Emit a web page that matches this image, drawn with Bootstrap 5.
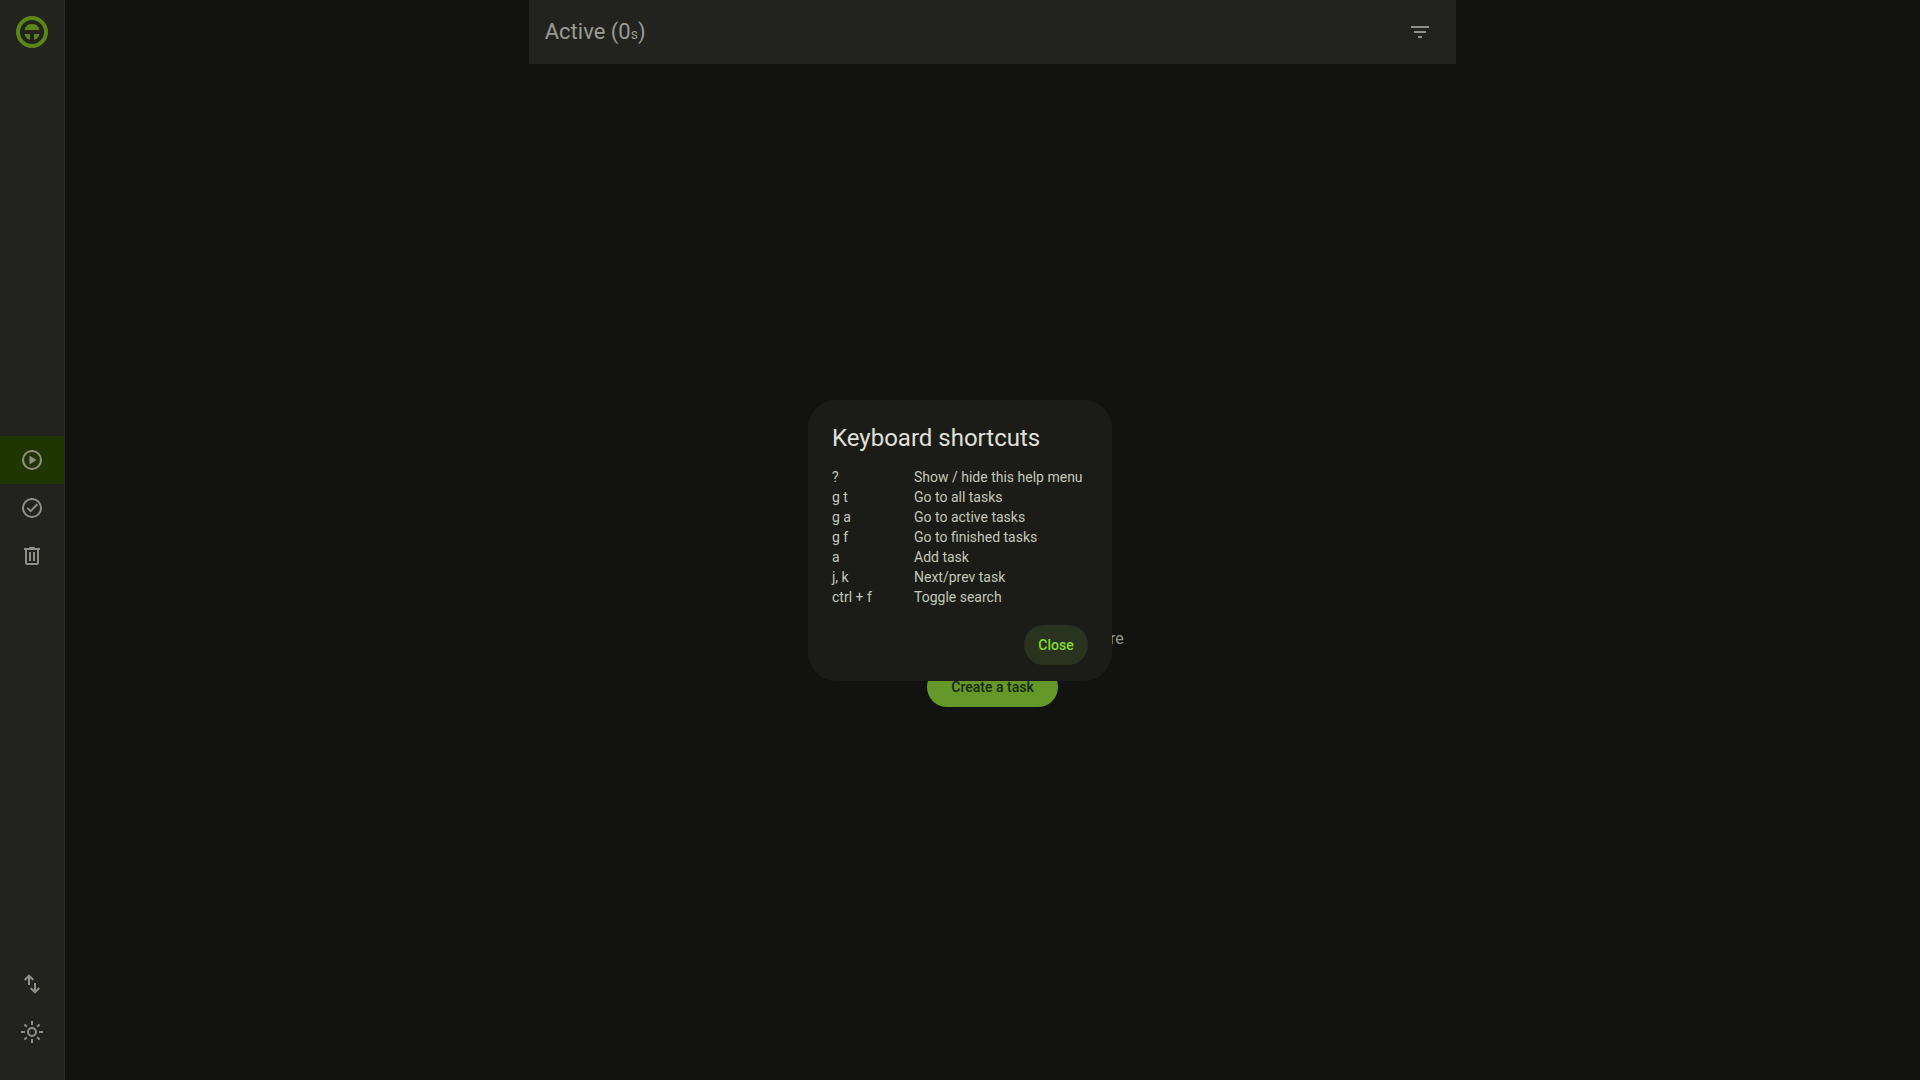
<!DOCTYPE html>
<html lang="en" data-bs-theme="dark">
<head>
<meta charset="utf-8">
<meta name="viewport" content="width=device-width, initial-scale=1">
<title>Active tasks</title>
<link href="https://cdn.jsdelivr.net/npm/bootstrap@5.3.0/dist/css/bootstrap.min.css" rel="stylesheet">
<style>
  body { background: #121310; color: #93948b; font-family: Roboto, "Liberation Sans", sans-serif; }
  .rail { width: 65px; background: #22231e; border-right: 1px solid #2e2f2a; color: #8f9087; }
  .rail-link { height: 48px; color: inherit; }
  .rail-link.active { background: #203600; }
  .brand-link { color: #5b8615; }
  .task-pane { width: 50%; }
  .pane-bar { height: 64px; background: #22231e; }
  .pane-title { font-size: 22px; line-height: 28px; padding-top: 2px; color: #9a9b92; }
  .unit { font-size: 14px; }
  .icon-btn { width: 40px; height: 40px; color: #8f9087; }
  .empty-state { padding-top: 190px; }
  .empty-note { font-size: 16px; line-height: 24px; }
  .pill { height: 40px; font-size: 14px; line-height: 20px; font-weight: 500; border-radius: 20px; border: 0; }
  .pill-main, .pill-main:hover { background: #659729; color: #14290a; min-width: 131px; }
  .pill-soft, .pill-soft:hover { background: #2a331f; color: #83dd2b; min-width: 64px; }
  .help-layer { padding-top: 1px; }
  .help-dialog { width: 304px; }
  .help-panel { background: #1b1c18; border: 0; border-radius: 28px; padding: 22px 24px 16px; }
  .help-title { font-size: 24px; line-height: 32px; color: #e0e0d8; font-weight: 400; }
  .help-keys { font-size: 14px; line-height: 20px; color: #c5c8b9; margin: 13px 0 18px; }
  .help-keys th { font-weight: 400; padding: 0; width: 82px; }
  .help-keys td { padding: 0; }
  svg { display: block; fill: currentColor; }
</style>
<script src="https://cdn.jsdelivr.net/npm/bootstrap@5.3.0/dist/js/bootstrap.bundle.min.js"></script>
</head>
<body>
<div class="d-flex vh-100">
  <nav class="rail d-flex flex-column justify-content-between flex-shrink-0 pb-4" aria-label="Main">
    <a href="#all" class="brand-link d-flex justify-content-center pt-3 pb-2" aria-label="All tasks">
      <svg width="32" height="32" viewBox="0 0 32 32"><circle cx="16" cy="16" r="14" fill="none" stroke="currentColor" stroke-width="4"/><path d="M8.500 14a7.700 7.700 0 0 1 15 0zM8.500 18H14v6a8 8 0 0 1-5.500-6zM18 18h5.500a8 8 0 0 1-5.500 6z"/></svg>
    </a>
    <div>
      <a href="#active" class="rail-link active d-flex align-items-center justify-content-center" aria-label="Active" aria-current="page">
        <svg width="24" height="24" viewBox="0 0 24 24"><path d="M12 2a10 10 0 1 0 0 20 10 10 0 0 0 0-20zm0 18a8 8 0 1 1 0-16 8 8 0 0 1 0 16zM9.500 16.500l7-4.500-7-4.500z"/></svg>
      </a>
      <a href="#finished" class="rail-link d-flex align-items-center justify-content-center" aria-label="Finished">
        <svg width="24" height="24" viewBox="0 0 24 24"><path d="M12 2a10 10 0 1 0 0 20 10 10 0 0 0 0-20zm0 18a8 8 0 1 1 0-16 8 8 0 0 1 0 16zm4.600-12.400L10.600 13.800 8 11.200 6.600 12.600l4 4 7.400-7.600z"/></svg>
      </a>
      <a href="#deleted" class="rail-link d-flex align-items-center justify-content-center" aria-label="Deleted">
        <svg width="24" height="24" viewBox="0 0 24 24"><path d="M9 3v1H4v2h1v13a2 2 0 0 0 2 2h10a2 2 0 0 0 2-2V6h1V4h-5V3zM7 6h10v13H7zM9 8v9h2V8zM13 8v9h2V8z"/></svg>
      </a>
    </div>
    <div>
      <a href="#sync" class="rail-link d-flex align-items-center justify-content-center" aria-label="Import and export">
        <svg width="24" height="24" viewBox="0 0 24 24" stroke="currentColor" stroke-width="2"><path fill="none" d="M9 13V4M4.700 8 9 3.700 13.300 8M15 11v9M10.700 16l4.300 4.300 4.300-4.300"/></svg>
      </a>
      <a href="#theme" class="rail-link d-flex align-items-center justify-content-center" aria-label="Theme">
        <svg width="24" height="24" viewBox="0 0 24 24"><path fill="none" stroke="currentColor" stroke-width="2" d="M12 1v4M12 19v4M1 12h4M19 12h4M4.500 4.500l2.300 2.300M17.200 17.200l2.300 2.300M19.500 4.500l-2.300 2.300M6.800 17.200l-2.300 2.300M12 8a4 4 0 1 0 0 8 4 4 0 0 0 0-8z"/></svg>
      </a>
    </div>
  </nav>
  <main class="flex-grow-1 d-flex justify-content-center">
    <section class="task-pane d-flex flex-column">
      <header class="pane-bar d-flex align-items-center justify-content-between px-3 flex-shrink-0">
        <h1 class="pane-title fw-normal mb-0">Active (0<span class="unit">s</span>)</h1>
        <button type="button" class="icon-btn btn p-0 d-flex align-items-center justify-content-center" aria-label="Filter">
          <svg width="24" height="24" viewBox="0 0 24 24"><path d="M10 18h4v-2h-4zM3 6v2h18V6zM6 13h12v-2H6z"/></svg>
        </button>
      </header>
      <div class="empty-state flex-grow-1 d-flex flex-column align-items-center justify-content-center text-center">
        <p class="empty-note mb-3">Your active tasks will be tracked here</p>
        <button type="button" class="pill pill-main btn px-4 py-0">Create a task</button>
      </div>
    </section>
  </main>
</div>
<div class="help-layer modal d-block" tabindex="-1" role="dialog" aria-labelledby="help-heading">
  <div class="help-dialog modal-dialog modal-dialog-centered">
    <div class="help-panel modal-content">
      <h2 id="help-heading" class="help-title mb-0">Keyboard shortcuts</h2>
      <table class="help-keys">
        <tbody>
          <tr><th scope="row">?</th><td>Show / hide this help menu</td></tr>
          <tr><th scope="row">g t</th><td>Go to all tasks</td></tr>
          <tr><th scope="row">g a</th><td>Go to active tasks</td></tr>
          <tr><th scope="row">g f</th><td>Go to finished tasks</td></tr>
          <tr><th scope="row">a</th><td>Add task</td></tr>
          <tr><th scope="row">j, k</th><td>Next/prev task</td></tr>
          <tr><th scope="row">ctrl + f</th><td>Toggle search</td></tr>
        </tbody>
      </table>
      <div class="d-flex justify-content-end">
        <button type="button" class="pill pill-soft btn py-0">Close</button>
      </div>
    </div>
  </div>
</div>
</body>
</html>
